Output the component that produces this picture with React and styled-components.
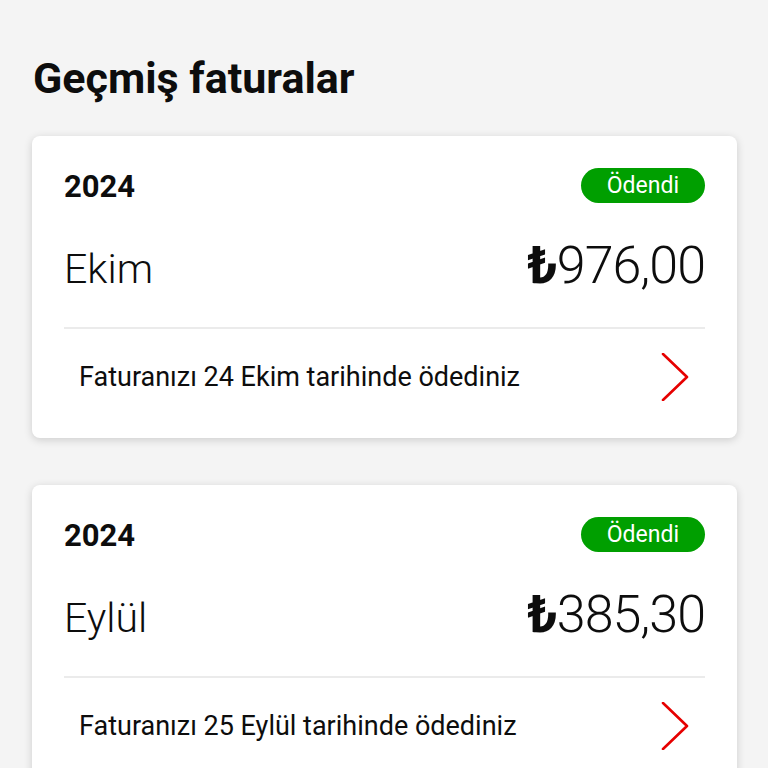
import React from "react";
import styled, { createGlobalStyle } from "styled-components";

const GlobalStyle = createGlobalStyle`
  html, body {
    margin: 0;
    padding: 0;
    background: #f4f4f4;
    font-family: Roboto, "Liberation Sans", sans-serif;
    color: #0d0d0d;
  }
`;

const Page = styled.div`
  padding: 52px 31px 0 32px;
  display: flex;
  flex-direction: column;
`;

const Title = styled.h1`
  margin: 0 0 32px 1px;
  font-size: 43px;
  line-height: 52px;
  font-weight: 700;
`;

const CardList = styled.div`
  display: flex;
  flex-direction: column;
  gap: 47px;
`;

const Card = styled.div`
  background: #fff;
  border-radius: 8px;
  box-shadow: 0 2px 8px rgba(0, 0, 0, 0.16);
  padding: 0 32px;
`;

const TopRow = styled.div`
  display: flex;
  justify-content: space-between;
  align-items: center;
  padding-top: 30px;
`;

const Year = styled.span`
  font-size: 31px;
  font-weight: 700;
  line-height: 36px;
  padding-top: 3px;
`;

const Badge = styled.span`
  background: #009f00;
  color: #fff;
  font-size: 23px;
  line-height: 35px;
  height: 35px;
  padding: 0 26px;
  border-radius: 18px;
`;

const AmountRow = styled.div`
  display: flex;
  justify-content: space-between;
  align-items: baseline;
  padding: 33px 0 33px;
  border-bottom: 2px solid #ebebeb;
`;

const Month = styled.span`
  font-size: 41px;
  font-weight: 300;
  line-height: 48px;
`;

const Amount = styled.span`
  font-size: 52px;
  font-weight: 300;
  line-height: 56px;
  letter-spacing: -1px;
`;

const Lira = styled.span`
  font-weight: 700;
`;

const BottomRow = styled.div`
  display: flex;
  justify-content: space-between;
  align-items: center;
  height: 109px;
  box-sizing: border-box;
  padding: 0 16px 13px 15px;
`;

const Note = styled.span`
  font-size: 27px;
  line-height: 32px;
`;

const Chevron = () => (
  <svg width="28" height="48" viewBox="0 0 28 48" fill="none">
    <path
      d="M2 1 L26 24 L2 47"
      stroke="#e60000"
      strokeWidth="2.6"
      strokeLinecap="round"
      strokeLinejoin="round"
    />
  </svg>
);

const invoices = [
  { year: "2024", month: "Ekim", amount: "976,00", day: "24 Ekim" },
  { year: "2024", month: "Eylül", amount: "385,30", day: "25 Eylül" },
];

export default function App() {
  return (
    <>
      <GlobalStyle />
      <Page>
        <Title>Geçmiş faturalar</Title>
        <CardList>
          {invoices.map((inv) => (
            <Card key={inv.day}>
              <TopRow>
                <Year>{inv.year}</Year>
                <Badge>Ödendi</Badge>
              </TopRow>
              <AmountRow>
                <Month>{inv.month}</Month>
                <Amount>
                  <Lira>₺</Lira>
                  {inv.amount}
                </Amount>
              </AmountRow>
              <BottomRow>
                <Note>Faturanızı {inv.day} tarihinde ödediniz</Note>
                <Chevron />
              </BottomRow>
            </Card>
          ))}
        </CardList>
      </Page>
    </>
  );
}
